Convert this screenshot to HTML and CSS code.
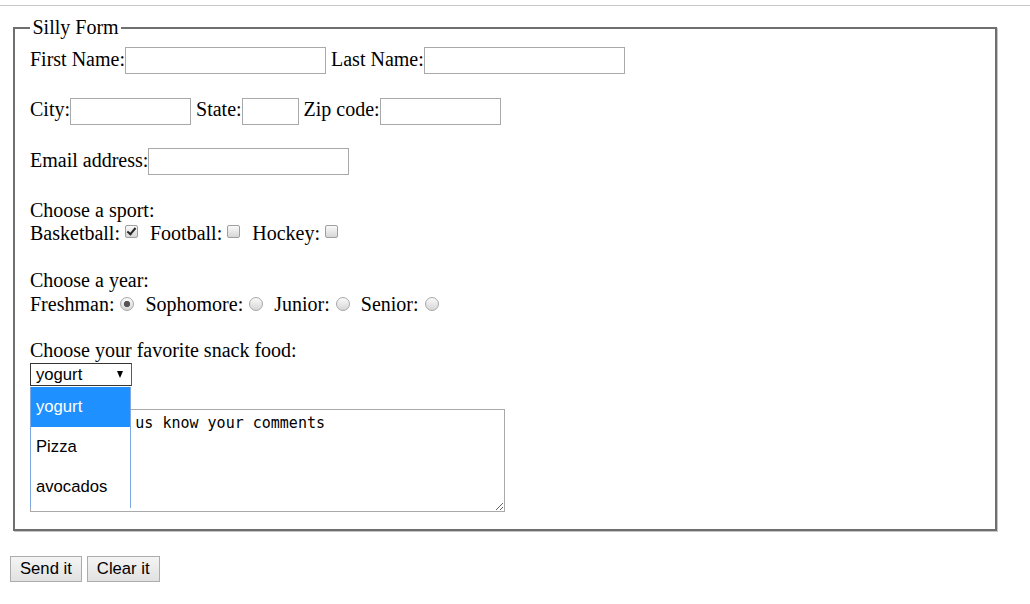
FILE: index.html
```html
<!DOCTYPE html>
<html lang="en">
<head>
<meta charset="utf-8">
<title>Silly Form</title>
<link rel="stylesheet" href="styles.css">
</head>
<body>
<div class="topline"></div>
<form class="page">
  <fieldset class="silly">
    <legend class="silly-legend">Silly Form</legend>
    <div class="row"><label>First Name:<input type="text" class="field w201"></label> <label>Last Name:<input type="text" class="field w201"></label></div>
    <div class="row"><label>City:<input type="text" class="field w121"></label> <label>State:<input type="text" class="field w57"></label> <label>Zip code:<input type="text" class="field w121"></label></div>
    <div class="row"><label>Email address:<input type="email" class="field w201"></label></div>

    <div class="group">
      <div class="line">Choose a sport:</div>
      <div class="line"><label>Basketball:<input type="checkbox" class="check" checked></label> <label>Football:<input type="checkbox" class="check"></label> <label>Hockey:<input type="checkbox" class="check"></label></div>
    </div>

    <div class="group year">
      <div class="line">Choose a year:</div>
      <div class="line radio-line"><label>Freshman:<input type="radio" name="year" class="radio" checked></label> <label>Sophomore:<input type="radio" name="year" class="radio"></label> <label>Junior:<input type="radio" name="year" class="radio"></label> <label>Senior:<input type="radio" name="year" class="radio"></label></div>
    </div>

    <div class="group snack">
      <div class="line">Choose your favorite snack food:</div>
      <div class="combo">
        <div class="select"><span class="select-value">yogurt</span><span class="select-arrow"></span></div>
        <ul class="listbox">
          <li class="option selected">yogurt</li>
          <li class="option">Pizza</li>
          <li class="option">avocados</li>
        </ul>
      </div>
      <textarea class="comments" aria-label="Comments">Please let us know your comments</textarea>
    </div>
  </fieldset>
  <div class="actions">
    <button type="submit" class="btn">Send it</button>
    <button type="reset" class="btn">Clear it</button>
  </div>
</form>
</body>
</html>
```

FILE: styles.css
```css
html {
  background: #ffffff;
}

body {
  margin: 0;
  font-family: "Liberation Serif", "Times New Roman", serif;
  font-size: 20px;
  color: #000000;
}

.topline {
  height: 5px;
  border-bottom: 1px solid #c9c9c9;
}

.page {
  padding: 10px;
  margin: 0;
}

.silly {
  box-sizing: border-box;
  width: 984px;
  margin: 0 0 0 3px;
  padding: 8px 15px 17px 15px;
  border: 2px solid #6f6f6f;
  box-shadow: 1px 1px 0 #c6c6c6;
  min-width: 0;
}

.silly-legend {
  padding: 0 2.5px;
  line-height: 23px;
  font-size: 20px;
}

.row {
  line-height: 23px;
  margin-bottom: 23.5px;
  white-space: nowrap;
}

.field {
  box-sizing: border-box;
  height: 27px;
  margin: 0;
  padding: 1px 2px;
  border: 1px solid #a9a9a9;
  background: #ffffff;
  font-family: "Liberation Sans", Arial, sans-serif;
  font-size: 16.67px;
  vertical-align: baseline;
}

.w201 { width: 201px; }
.w121 { width: 121px; }
.w57 { width: 57px; }

.group {
  margin-bottom: 23.5px;
}

.group.year {
  margin-bottom: 22.5px;
}

.line {
  line-height: 23.3px;
  white-space: nowrap;
}

.radio-line {
  padding-top: 1px;
}

.check,
.radio {
  -webkit-appearance: none;
  appearance: none;
  box-sizing: border-box;
  position: relative;
  border: 1px solid #9f9f9f;
  background: linear-gradient(#fafafa, #d6d6d6);
  vertical-align: baseline;
}

.check {
  width: 13px;
  height: 13px;
  margin: 0 7px 2px 5px;
  border-radius: 2px;
}

.check:checked::after {
  content: "";
  position: absolute;
  left: 3.5px;
  top: 0;
  width: 3px;
  height: 7px;
  border: solid #262626;
  border-width: 0 2.3px 2.3px 0;
  transform: rotate(40deg);
}

.radio {
  width: 14px;
  height: 14px;
  margin: 0 6px 0 6px;
  border-radius: 50%;
  border-color: #a8a8a8;
}

.radio:checked {
  background: radial-gradient(circle, #555555 0 2.8px, rgba(85, 85, 85, 0) 3.5px), linear-gradient(#fafafa, #d6d6d6);
}

.snack {
  margin-bottom: 0;
}

.combo {
  position: relative;
  width: 102px;
  height: 23px;
  margin-top: 1px;
  margin-bottom: 23px;
}

.select {
  box-sizing: border-box;
  display: flex;
  align-items: center;
  justify-content: space-between;
  width: 102px;
  height: 23px;
  padding: 1px 8px 0 5px;
  border: 1px solid #353535;
  border-right-color: #4b5d78;
  background: #ffffff;
  font-family: "Liberation Sans", Arial, sans-serif;
  font-size: 16.67px;
  line-height: 19px;
}

.select-arrow {
  width: 0;
  height: 0;
  margin-top: 0;
  border-left: 3.5px solid transparent;
  border-right: 3.5px solid transparent;
  border-top: 7px solid #000000;
}

.listbox {
  position: absolute;
  z-index: 2;
  top: 24px;
  left: 0;
  box-sizing: border-box;
  width: 101px;
  height: 121px;
  margin: 0;
  padding: 0;
  list-style: none;
  overflow: hidden;
  background: #ffffff;
  border-left: 1px solid #7ea6e0;
  border-right: 1px solid #7ea6e0;
  font-family: "Liberation Sans", Arial, sans-serif;
  font-size: 16.67px;
}

.option {
  height: 40px;
  line-height: 40px;
  padding: 0 0 0 5px;
  box-sizing: border-box;
  color: #000000;
}

.option.selected {
  background: #1e90ff;
  color: #ffffff;
}

.comments {
  display: block;
  box-sizing: border-box;
  width: 475px;
  height: 103px;
  margin: 0;
  padding: 4px 3px 2px 5px;
  border: 1px solid #a9a9a9;
  font-family: "DejaVu Sans Mono", "Liberation Mono", monospace;
  font-size: 15px;
  resize: both;
}

.actions {
  display: flex;
  gap: 5px;
  margin-top: 25px;
}

.btn {
  box-sizing: border-box;
  height: 26px;
  margin: 0;
  padding: 0 9px;
  border: 1px solid #acacac;
  border-radius: 0;
  background: linear-gradient(#f4f4f4, #e1e1e1);
  font-family: "Liberation Sans", Arial, sans-serif;
  font-size: 16.67px;
  color: #000000;
}
```
